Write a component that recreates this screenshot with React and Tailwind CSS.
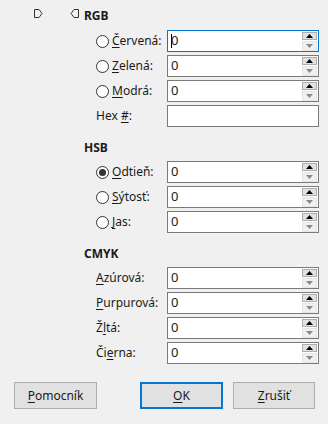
import React from 'react';

const font = { fontFamily: '"Noto Sans", "Liberation Sans", sans-serif' };

const U = ({ children }) => <span className="underline underline-offset-2">{children}</span>;

const Radio = ({ checked }) => (
  <span className="w-[13px] h-[13px] rounded-full border border-[#333] bg-white flex items-center justify-center shrink-0">
    {checked && <span className="w-[7px] h-[7px] rounded-full bg-[#333]" />}
  </span>
);

const Spin = () => (
  <div className="flex flex-col gap-[1px] mr-[1px]">
    <div className="w-[15px] h-[8px] bg-[#e1e1e1] border border-[#adadad] flex items-center justify-center">
      <svg width="7" height="4" viewBox="0 0 7 4"><path d="M0 4 L3.5 0 L7 4 Z" fill="#000" /></svg>
    </div>
    <div className="w-[15px] h-[10px] bg-[#f0f0f0] border border-[#e5e5e5] flex items-center justify-center">
      <svg width="7" height="4" viewBox="0 0 7 4"><path d="M0 0 L7 0 L3.5 4 Z" fill="#8a8a8a" /></svg>
    </div>
  </div>
);

const Field = ({ focused, spin = true, value = '0' }) => (
  <div
    className={`w-[152px] h-[22px] bg-white flex items-center justify-between border ${
      focused ? 'border-[#0078d7]' : 'border-[#7a7a7a]'
    }`}
  >
    <span className="pl-[3px] text-[13px] text-[#222] flex items-center">
      {focused && <span className="w-[1px] h-[14px] bg-black -mr-[1px]" />}
      {spin ? value : ''}
    </span>
    {spin && <Spin />}
  </div>
);

const Row = ({ radio, checked, label, ...rest }) => (
  <div className="flex items-center h-[22px]">
    <div className="w-[83px] pl-[12px] flex items-center">
      {radio !== undefined && (
        <>
          <Radio checked={checked} />
          <span className="ml-[3px]">{label}</span>
        </>
      )}
      {radio === undefined && <span>{label}</span>}
    </div>
    <Field {...rest} />
  </div>
);

const Btn = ({ children, primary, className }) => (
  <div
    className={`h-[27px] flex items-center justify-center bg-[#e1e1e1] ${
      primary ? 'border-2 border-[#0078d7]' : 'border border-[#adadad]'
    } ${className}`}
  >
    {children}
  </div>
);

export default function App() {
  return (
    <div className="w-[328px] h-[424px] bg-[#f0f0f0] text-[12px] text-[#1a1a1a]" style={font}>
      <div className="flex items-start pt-[6px]">
        <svg className="ml-[34px] mt-[3px]" width="9" height="9" viewBox="0 0 9 9">
          <path d="M0.5 0.5 H5 L8 4.5 L5 8.5 H0.5 Z" fill="none" stroke="#333" strokeWidth="1" />
        </svg>
        <svg className="ml-[27px] mt-[3px]" width="9" height="9" viewBox="0 0 9 9">
          <path d="M8.5 0.5 H4 L1 4.5 L4 8.5 H8.5 Z" fill="none" stroke="#333" strokeWidth="1" />
        </svg>
        <div className="ml-[5px] font-bold leading-[20px]">RGB</div>
      </div>

      <div className="pl-[84px] flex flex-col gap-[3px] mt-[4px]">
        <Row radio checked={false} label={<><U>Č</U>ervená:</>} focused />
        <Row radio checked={false} label={<><U>Z</U>elená:</>} />
        <Row radio checked={false} label={<><U>M</U>odrá:</>} />
        <Row label={<>Hex <U>#</U>:</>} spin={false} />

        <div className="font-bold leading-[20px] mt-[8px]">HSB</div>
        <Row radio checked label={<><U>O</U>dtieň:</>} />
        <Row radio checked={false} label={<><U>S</U>ýtosť:</>} />
        <Row radio checked={false} label={<><U>J</U>as:</>} />

        <div className="font-bold leading-[20px] mt-[8px]">CMYK</div>
        <Row label={<><U>A</U>zúrová:</>} />
        <Row label={<><U>P</U>urpurová:</>} />
        <Row label={<>Ž<U>l</U>tá:</>} />
        <Row label={<>Či<U>e</U>rna:</>} />
      </div>

      <div className="flex mt-[18px]">
        <Btn className="ml-[14px] w-[83px]"><U>P</U>omocník</Btn>
        <Btn primary className="ml-[43px] w-[83px]"><U>O</U>K</Btn>
        <Btn className="ml-[10px] w-[82px]"><U>Z</U>rušiť</Btn>
      </div>
    </div>
  );
}
